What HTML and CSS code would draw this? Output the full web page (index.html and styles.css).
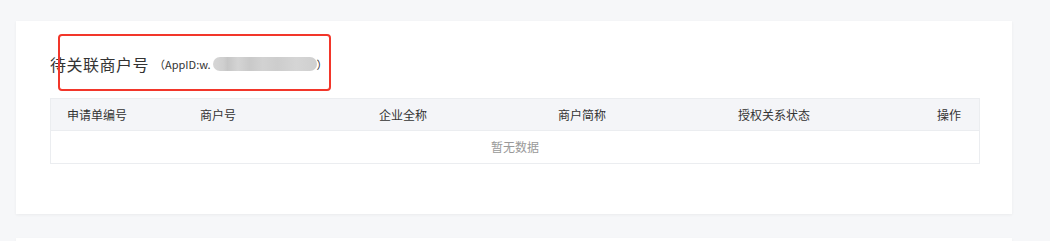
FILE: index.html
```html
<!DOCTYPE html>
<html lang="zh-CN">
<head>
    <meta charset="UTF-8">
    <title>待关联商户号</title>
    <link rel="stylesheet" href="styles.css">
</head>
<body>
    <div class="page">
        <div class="card">
            <div class="card-title">
                <span class="title-text">待关联商户号</span>
                <span class="appid">（AppID:w.<span class="masked"></span>）</span>
                <div class="highlight"></div>
            </div>

            <div class="table">
                <div class="row head">
                    <div class="cell">申请单编号</div>
                    <div class="cell">商户号</div>
                    <div class="cell">企业全称</div>
                    <div class="cell">商户简称</div>
                    <div class="cell">授权关系状态</div>
                    <div class="cell right">操作</div>
                </div>
                <div class="empty">暂无数据</div>
            </div>
        </div>

        <div class="card next"></div>
    </div>
</body>
</html>
```

FILE: styles.css
```css
body {
    margin: 0;
    background-color: #f6f7f9;
    font-family: "Noto Sans CJK SC", "Noto Sans", sans-serif;
    color: #333;
    overflow: hidden;
}

.page {
    padding: 21px 38px 0 16px;
}

.card {
    background-color: #fff;
    height: 193px;
    box-sizing: border-box;
    padding: 31px 32px 0 34px;
    box-shadow: 0 1px 3px rgba(0, 0, 0, 0.05);
}

.card.next {
    margin-top: 24px;
    height: 3px;
    padding: 0;
}

/* title with AppID */
.card-title {
    position: relative;
    display: flex;
    align-items: center;
    height: 24px;
}

.title-text {
    font-size: 16px;
    color: #333;
    letter-spacing: 0.5px;
}

.appid {
    display: flex;
    align-items: center;
    font-size: 11px;
    color: #333;
    margin-left: 5px;
}

.masked {
    display: inline-block;
    width: 104px;
    height: 14px;
    margin-left: 2px;
    border-radius: 7px;
    background: linear-gradient(90deg, #d6d6d6 0%, #cfcfcf 10%, #c6c6c6 14%, #d4d4d4 24%, #c9c9c9 35%, #d2d2d2 48%, #cdcdcd 62%, #d5d5d5 80%, #cfcfcf 100%);
    filter: blur(0.6px);
}

.highlight {
    position: absolute;
    left: 8px;
    top: -18px;
    width: 269px;
    height: 53px;
    border: 2px solid #f2362a;
    border-radius: 4px;
}

/* table */
.table {
    margin-top: 22px;
    border: 1px solid #ebedf0;
}

.row {
    display: grid;
    grid-template-columns: 133px 179px 179px 180px 1fr 1fr;
    align-items: center;
    height: 31px;
    padding: 0 18px 0 16px;
    font-size: 12px;
}

.row.head {
    background-color: #f4f5f8;
    border-bottom: 1px solid #ebedf0;
}

.cell.right {
    text-align: right;
}

.empty {
    height: 32px;
    line-height: 32px;
    text-align: center;
    font-size: 12px;
    color: #999;
}
```
